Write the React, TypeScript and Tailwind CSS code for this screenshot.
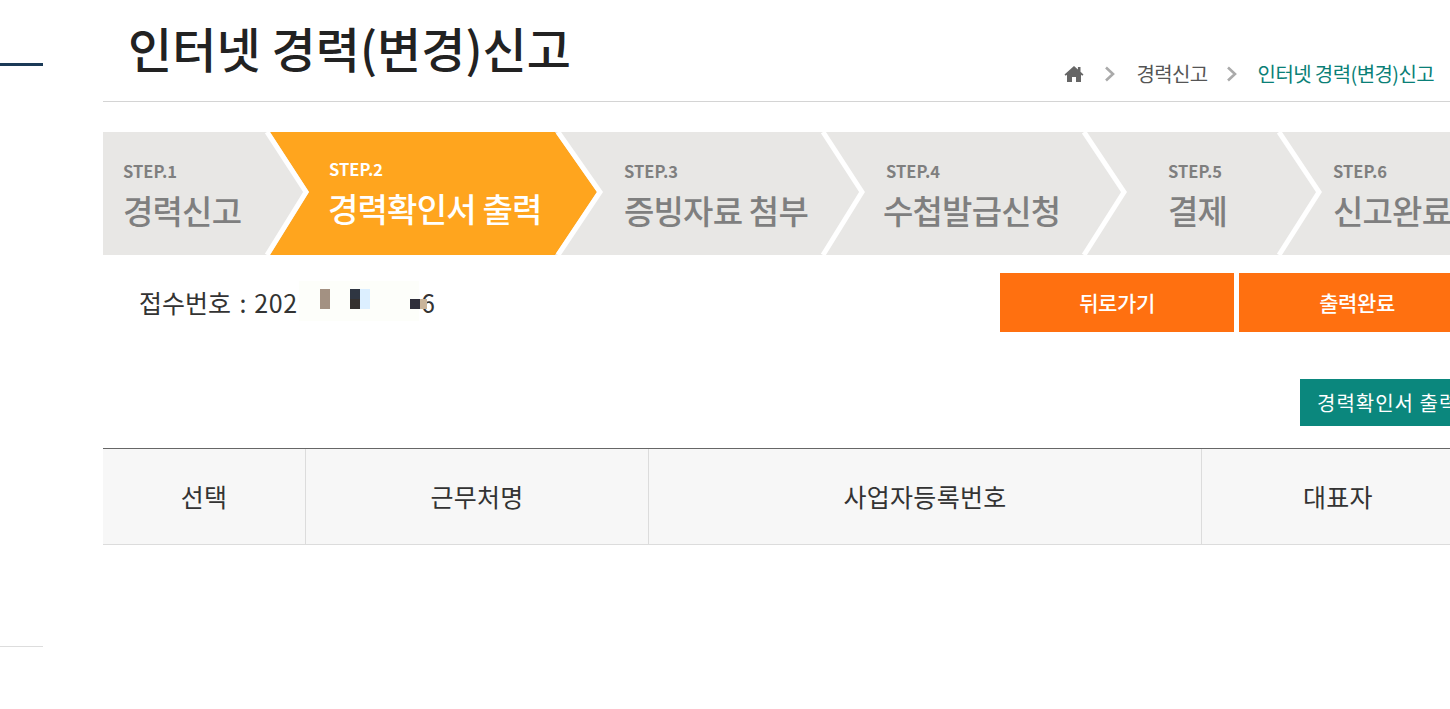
import React from "react";

const steps = [
  { n: "STEP.1", t: "경력신고", w: "w-[207px] pl-[20px]", active: false, title: "ml-0" },
  { n: "STEP.2", t: "경력확인서 출력", w: "w-[294px] pl-[19px]", active: true, title: "-ml-[1px]" },
  { n: "STEP.3", t: "증빙자료 첨부", w: "w-[262px] pl-[20px]", active: false, title: "-ml-[0px]" },
  { n: "STEP.4", t: "수첩발급신청", w: "w-[258px] pl-[20px]", active: false, title: "-ml-[3px]" },
  { n: "STEP.5", t: "결제", w: "w-[193px] pl-[44px]", active: false, title: "ml-0" },
  { n: "STEP.6", t: "신고완료", w: "w-[200px] pl-[16px]", active: false, title: "ml-0" },
];

const font = "font-['Noto_Sans_CJK_KR','Noto_Sans',sans-serif]";

function StepShapes() {
  return (
    <svg className="absolute inset-0" width="1347" height="123" viewBox="0 0 1347 123">
      <polygon points="167,0 452,0 494,60 452,123 167,123 206,60" fill="#ffa51e" />
      <polyline points="164,0 203,60 164,123" fill="none" stroke="#fff" strokeWidth="5" />
      <polyline points="455,0 497,60 455,123" fill="none" stroke="#fff" strokeWidth="5" />
      <polyline points="720,0 759,60 720,123" fill="none" stroke="#fff" strokeWidth="5" />
      <polyline points="981,0 1021,60 981,123" fill="none" stroke="#fff" strokeWidth="5" />
      <polyline points="1176,0 1216,60 1176,123" fill="none" stroke="#fff" strokeWidth="5" />
    </svg>
  );
}

export default function App() {
  return (
    <div className={`flex h-[709px] w-[1450px] overflow-hidden bg-white ${font}`}>
      <aside className="w-[43px] flex-none flex flex-col">
        <div className="h-[3px] bg-[#1b3a57] mt-[63px]" />
        <div className="h-px bg-[#dddddd] mt-[580px]" />
      </aside>
      <main className="ml-[60px] w-[1347px] flex-none">
        <header className="h-[102px] border-b border-[#d4d4d4] flex items-start justify-between">
          <h1 className="ml-[25px] mt-[12px] text-[48px] leading-[70px] font-medium text-[#222222] whitespace-nowrap tracking-[0.05px]">
            인터넷 경력(변경)신고
          </h1>
          <nav className="mt-[60px] mr-[16px] flex items-center text-[20px] leading-[28px] tracking-[-0.6px] whitespace-nowrap">
            <svg width="20" height="18" viewBox="0 0 20 18" fill="#666666">
              <path d="M10 1 0.5 9.6l1.2 1.2L3 9.7V17h5v-5h4v5h5V9.7l1.3 1.1 1.2-1.2L16.5 6.7V2h-2.6v2.4z" />
            </svg>
            <svg className="ml-[20px]" width="12" height="16" viewBox="0 0 12 16" fill="none" stroke="#aaaaaa" strokeWidth="2.6">
              <path d="M2 1.5 9 8l-7 6.5" />
            </svg>
            <span className="ml-[20px] text-[#555555]">경력신고</span>
            <svg className="ml-[18px]" width="12" height="16" viewBox="0 0 12 16" fill="none" stroke="#aaaaaa" strokeWidth="2.6">
              <path d="M2 1.5 9 8l-7 6.5" />
            </svg>
            <span className="ml-[20px] text-[#0a7f77]">인터넷 경력(변경)신고</span>
          </nav>
        </header>

        <section className="relative mt-[30px] h-[123px] bg-[#e8e7e5] overflow-hidden">
          <StepShapes />
          <div className="relative flex h-full">
            {steps.map((s) => (
              <div key={s.n} className={`${s.w} flex-none pt-[28px] whitespace-nowrap ${s.active ? "text-white" : "text-[#7f7f7f]"}`}>
                <div className={`text-[16.5px] leading-[22px] font-bold ${s.active ? "-mt-[2px]" : ""}`}>{s.n}</div>
                <div className={`mt-[5px] text-[33px] leading-[46px] font-medium tracking-[-0.8px] ${s.title}`}>{s.t}</div>
              </div>
            ))}
          </div>
        </section>

        <section className="mt-[18px] h-[59px] flex items-start">
          <div className="relative ml-[36px] mt-[12px] text-[25px] leading-[34px] text-[#333333] whitespace-nowrap">
            접수번호 <span className="ml-[3px]">:</span> <span className="ml-[2px] tracking-[0.7px]">202</span>
            <span className="ml-[123px]">6</span>
            <span className="absolute left-[160px] -top-[4px] w-[120px] h-[40px] bg-[#fdfefa]" />
            <span className="absolute left-[181px] top-[4px] w-[10px] h-[20px] bg-[#a39182]" />
            <span className="absolute left-[211px] top-[4px] w-[10px] h-[10px] bg-[#2f3642]" />
            <span className="absolute left-[211px] top-[14px] w-[10px] h-[10px] bg-[#35312f]" />
            <span className="absolute left-[221px] top-[4px] w-[10px] h-[20px] bg-[#dcefff]" />
            <span className="absolute left-[271px] top-[14px] w-[10px] h-[10px] bg-[#2f2f3a]" />
            <span className="absolute left-[281px] top-[14px] w-[7px] h-[10px] bg-[#c9b49a]" />
          </div>
          <div className="ml-auto flex gap-[5px] -mr-[25px]">
            <button className="w-[234px] h-[59px] bg-[#ff7010] text-white text-[21px] font-medium tracking-[-0.4px]">뒤로가기</button>
            <button className="w-[236px] h-[59px] bg-[#ff7010] text-white text-[21px] font-medium tracking-[-0.4px]">출력완료</button>
          </div>
        </section>

        <section className="mt-[47px] flex justify-end">
          <button className="w-[190px] h-[47px] -mr-[40px] flex-none bg-[#0b877d] text-white text-[20px] tracking-[1px] text-left pl-[17px] whitespace-nowrap">
            경력확인서 출력
          </button>
        </section>

        <section className="mt-[22px] border-t border-[#666666] h-[97px] bg-[#f7f7f7] border-b-[1px] border-b-[#dcdcdc] flex text-[25px] tracking-[0.3px] text-[#333333]">
          <div className="w-[203px] flex-none flex items-center justify-center border-r border-[#dcdcdc]">선택</div>
          <div className="w-[343px] flex-none flex items-center justify-center border-r border-[#dcdcdc]">근무처명</div>
          <div className="w-[553px] flex-none flex items-center justify-center border-r border-[#dcdcdc]">사업자등록번호</div>
          <div className="w-[248px] flex-none pl-[101px] flex items-center whitespace-nowrap">대표자</div>
        </section>
      </main>
    </div>
  );
}
